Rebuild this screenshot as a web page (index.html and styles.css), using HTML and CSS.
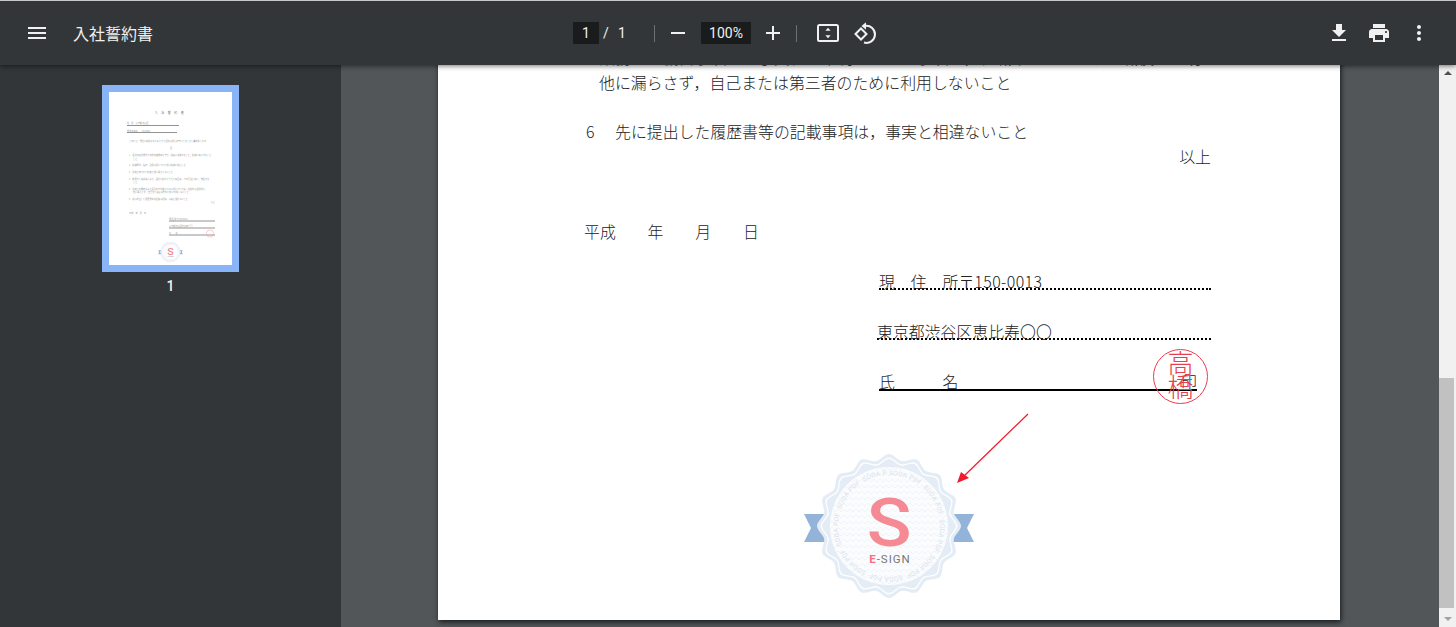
FILE: index.html
```html
<!DOCTYPE html>
<html lang="ja">
<head>
    <meta charset="UTF-8">
    <title>入社誓約書</title>
    <link rel="stylesheet" href="styles.css">
</head>
<body>
    <div class="toolbar">
        <div class="toolbar-left">
            <svg class="icon" viewBox="0 0 24 24"><path d="M3 18h18v-2H3v2zm0-5h18v-2H3v2zm0-7v2h18V6H3z"/></svg>
            <span class="doc-title">入社誓約書</span>
        </div>
        <div class="toolbar-center">
            <span class="num-box page-box">1</span>
            <span class="page-slash">/</span>
            <span class="page-total">1</span>
            <span class="tool-sep sep-a"></span>
            <svg class="icon icon-minus" viewBox="0 0 24 24"><path d="M19 13H5v-2h14v2z"/></svg>
            <span class="num-box zoom-box">100%</span>
            <svg class="icon icon-plus" viewBox="0 0 24 24"><path d="M19 13h-6v6h-2v-6H5v-2h6V5h2v6h6v2z"/></svg>
            <span class="tool-sep sep-b"></span>
            <svg class="icon icon-fit" viewBox="0 0 24 24">
                <rect x="2" y="4" width="20" height="16" rx="1.5" fill="none" stroke="#f1f1f1" stroke-width="2"/>
                <path d="M12 6.8l2.6 3h-5.2zM12 17.2l-2.6-3h5.2z"/>
            </svg>
            <svg class="icon icon-rotate" viewBox="0 0 24 24">
                <path d="M2.5 13l5.5-5.5 5.5 5.5-5.500 5.500z" fill="none" stroke="#f1f1f1" stroke-width="2"/>
                <path d="M12 5a8.500 8.500 0 1 1-1 16.500" fill="none" stroke="#f1f1f1" stroke-width="2"/>
                <path d="M13 1.300l-4.500 3.700 4.500 3.700z"/>
            </svg>
        </div>
        <div class="toolbar-right">
            <svg class="icon" viewBox="0 0 24 24"><path d="M19 9h-4V3H9v6H5l7 7 7-7zM5 18v2h14v-2H5z"/></svg>
            <svg class="icon" viewBox="0 0 24 24"><path d="M19 8H5c-1.660 0-3 1.340-3 3v6h4v4h12v-4h4v-6c0-1.660-1.340-3-3-3zm-3 11H8v-5h8v5zm3-7c-.55 0-1-.45-1-1s.45-1 1-1 1 .45 1 1-.45 1-1 1zm-1-9H6v4h12V3z"/></svg>
            <svg class="icon" viewBox="0 0 24 24"><path d="M12 8c1.100 0 2-.9 2-2s-.9-2-2-2-2 .9-2 2 .9 2 2 2zm0 2c-1.100 0-2 .9-2 2s.9 2 2 2 2-.9 2-2-.9-2-2-2zm0 6c-1.100 0-2 .9-2 2s.9 2 2 2 2-.9 2-2-.9-2-2-2z"/></svg>
        </div>
    </div>

    <div class="viewer">
        <div class="sidebar">
            <div class="thumb">
                <svg class="thumb-page" viewBox="0 0 123 173">
                    <g class="thumb-text">
                        <text x="62" y="22" text-anchor="middle" class="thumb-title">入社誓約書</text>
                        <text x="18" y="32">住　所　東京都渋谷区</text>
                        <text x="18" y="39.500">緊急連絡先　　03-0000</text>
                        <text x="20" y="50">このたび，貴社に就職するにあたり下記の事項を遵守いたすことを誓約致します。</text>
                        <text x="61" y="57">記</text>
                        <text x="20" y="64">1　会社の就業規則その他の諸規程を守り，誠実に勤務すること，職務に専念すること</text>
                        <text x="24" y="67.500">こと</text>
                        <text x="20" y="73.500">2　職務命令，指示，注意事項について従い職務に励むこと</text>
                        <text x="20" y="80.500">3　業務上知り得た秘密を他に漏らさないこと</text>
                        <text x="20" y="87.500">4　故意または過失により，会社に損害を与えた場合は，その責任を負い，賠償する</text>
                        <text x="24" y="91">こと</text>
                        <text x="20" y="97.500">5　業務上の機密および会社の不利益となる事項については，在職中も退職後も，</text>
                        <text x="24" y="101">他に漏らさず，自己または第三者のために利用しないこと</text>
                        <text x="20" y="107.500">6　先に提出した履歴書等の記載事項は，事実と相違ないこと</text>
                        <text x="106" y="111" text-anchor="end">以上</text>
                        <text x="20" y="121.500">平成　年　月　日</text>
                        <text x="60" y="128">現 住 所〒150-0013</text>
                        <text x="60" y="135">東京都渋谷区恵比寿〇〇</text>
                        <text x="60" y="142">氏　　名</text>
                    </g>
                    <path class="thumb-rule" d="M18 33.500h52M18 40.500h50M60 129h46M60 136h46M60 143h46"/>
                    <circle class="thumb-stamp" cx="101" cy="141.500" r="3.600"/>
                    <use href="#seal-art" transform="translate(61.500 160) scale(.145)"/>
                </svg>
            </div>
            <div class="thumb-num">1</div>
        </div>

        <div class="main">
            <div class="page">
                <p class="line indent first-line">業務上の機密事項および貴社の不利益となる事項は，在職中はもとより退職後も一切</p>
                <p class="line indent">他に漏らさず，自己または第三者のために利用しないこと</p>
                <p class="line item-six"><span class="item-no">6</span>先に提出した履歴書等の記載事項は，事実と相違ないこと</p>
                <p class="line closing">以上</p>
                <p class="line date">平成　　年　　月　　日</p>

                <div class="sign">
                    <div class="sign-row dotted">現　住　所〒<span class="zip">150-0013</span></div>
                    <div class="sign-row dotted wide">東京都渋谷区恵比寿〇〇</div>
                    <div class="sign-row solid"><span>氏　　　名</span><span>印</span></div>
                </div>

                <div class="stamp"><span>高</span><span>橋</span></div>

                <svg class="arrow" viewBox="0 0 85 80">
                    <path d="M78 4L13 67" fill="none" stroke="#f01c2c" stroke-width="1.300"/>
                    <path d="M7 73l4-11 8 6z" fill="#f01c2c"/>
                </svg>

                <svg class="seal" viewBox="-85 -75 170 150">
                    <defs>
                        <path id="wedge" d="M0 0L-12.880 -64.730C-9.400 -65.400 -4 -72 0 -72S9.400 -65.400 12.880 -64.730Z"/>
                        <g id="scallop">
                            <use href="#wedge"/>
                            <use href="#wedge" transform="rotate(22.500)"/>
                            <use href="#wedge" transform="rotate(45)"/>
                            <use href="#wedge" transform="rotate(67.500)"/>
                            <use href="#wedge" transform="rotate(90)"/>
                            <use href="#wedge" transform="rotate(112.500)"/>
                            <use href="#wedge" transform="rotate(135)"/>
                            <use href="#wedge" transform="rotate(157.500)"/>
                            <use href="#wedge" transform="rotate(180)"/>
                            <use href="#wedge" transform="rotate(202.500)"/>
                            <use href="#wedge" transform="rotate(225)"/>
                            <use href="#wedge" transform="rotate(247.500)"/>
                            <use href="#wedge" transform="rotate(270)"/>
                            <use href="#wedge" transform="rotate(292.500)"/>
                            <use href="#wedge" transform="rotate(315)"/>
                            <use href="#wedge" transform="rotate(337.500)"/>
                            <circle r="66"/>
                        </g>
                        <pattern id="zigzag" width="12" height="6" patternUnits="userSpaceOnUse">
                            <path d="M0 4l3-3 3 3 3-3 3 3" fill="none" stroke="#edf1f7" stroke-width=".8"/>
                        </pattern>
                        <path id="ring-path" d="M0 -51A51 51 0 1 1 -.01 -51"/>
                    </defs>
                    <g id="seal-art">
                        <path class="ribbon" d="M-85 -12H-64V16H-85L-78 2z"/>
                        <path class="ribbon" d="M85 -12H64V16H85L78 2z"/>
                        <use href="#scallop" fill="#e4ecf5"/>
                        <use href="#scallop" fill="#ffffff" transform="scale(.95)"/>
                        <use href="#scallop" fill="#e4ecf5" transform="scale(.93)"/>
                        <circle r="59" fill="#fbfcfd"/>
                        <circle r="59" fill="url(#zigzag)"/>
                        <text class="seal-ring"><textPath href="#ring-path">SODA PDF  SODA PDF  SODA PDF  SODA PDF  SODA PDF  SODA PDF  SODA PDF  SODA PDF  SODA PDF</textPath></text>
                        <text class="seal-s" x="0" y="20" text-anchor="middle" transform="scale(1.12 1)">S</text>
                        <text class="seal-name" x="1" y="36.500" text-anchor="middle"><tspan class="seal-e">E</tspan>-SIGN</text>
                    </g>
                </svg>
            </div>
        </div>

        <div class="scrollbar">
            <div class="scroll-up"></div>
            <div class="scroll-track"><div class="scroll-thumb"></div></div>
            <div class="scroll-down"></div>
        </div>
    </div>
</body>
</html>
```

FILE: styles.css
```css
* {
    box-sizing: border-box;
}
html, body {
    height: 100%;
}
body {
    margin: 0;
    display: flex;
    flex-direction: column;
    overflow: hidden;
    font-family: Roboto, "Noto Sans CJK JP", sans-serif;
    background-color: #323639;
}

/* toolbar */
.toolbar {
    position: relative;
    z-index: 2;
    flex: 0 0 65px;
    display: flex;
    align-items: center;
    padding-left: 25px;
    padding-right: 25px;
    background-color: #323639;
    border-top: 1px solid #c8c8c8;
    box-shadow: 0 1px 5px rgba(0, 0, 0, 0.55);
    color: #f1f1f1;
    font-size: 14px;
}
.icon {
    flex: none;
    width: 24px;
    height: 24px;
    fill: #f1f1f1;
}
.toolbar-left {
    width: 548px;
    display: flex;
    align-items: center;
}
.doc-title {
    margin-left: 24px;
    font-family: "Noto Sans CJK JP", sans-serif;
    font-size: 16px;
    font-weight: 400;
}
.toolbar-center {
    display: flex;
    align-items: center;
}
.num-box {
    height: 22px;
    line-height: 22px;
    text-align: center;
    background-color: #191b1c;
}
.page-box {
    width: 26px;
}
.zoom-box {
    width: 50px;
    margin-left: 11px;
}
.page-slash {
    width: 14px;
    text-align: center;
}
.page-total {
    width: 18px;
    text-align: center;
}
.tool-sep {
    width: 1px;
    height: 17px;
    background-color: #6e7174;
}
.sep-a {
    margin-left: 23px;
}
.sep-b {
    margin-left: 11px;
}
.icon-minus {
    margin-left: 11px;
}
.icon-plus {
    margin-left: 10px;
}
.icon-fit {
    margin-left: 19px;
}
.icon-rotate {
    margin-left: 13px;
}
.toolbar-right {
    margin-left: auto;
    display: flex;
    gap: 16px;
}

/* body of the viewer */
.viewer {
    flex: 1;
    min-height: 0;
    display: flex;
}
.sidebar {
    flex: 0 0 341px;
    padding-top: 20px;
    display: flex;
    flex-direction: column;
    align-items: center;
    background-color: #323639;
}
.thumb {
    width: 137px;
    height: 187px;
    border: 7px solid #8ab4f8;
    background-color: white;
}
.thumb-page {
    display: block;
    width: 123px;
    height: 173px;
}
.thumb-text {
    font-family: "Noto Sans CJK JP", sans-serif;
    font-size: 2.150px;
    fill: #999;
}
.thumb-title {
    font-size: 3px;
    letter-spacing: 3.500px;
    fill: #777;
}
.thumb-rule {
    fill: none;
    stroke: #777;
    stroke-width: .8;
}
.thumb-stamp {
    fill: none;
    stroke: #f29aa2;
    stroke-width: .5;
}
.thumb-num {
    margin-top: 5px;
    color: #f1f1f1;
    font-size: 14px;
    font-weight: 500;
    line-height: 18px;
}

.main {
    flex: 1;
    min-width: 0;
    overflow: hidden;
    display: flex;
    justify-content: center;
    padding-right: 2px;
    background-color: #525659;
}
.page {
    position: relative;
    flex: 0 0 902px;
    min-width: 0;
    height: 573px;
    margin-top: -18px;
    padding-left: 147px;
    padding-right: 129px;
    background-color: white;
    box-shadow: 1px 2px 5px rgba(0, 0, 0, 0.7);
    font-family: "Noto Sans CJK JP", sans-serif;
    font-size: 15.900px;
    font-weight: 300;
    color: #222;
}
.line {
    margin: 0;
    line-height: 24px;
    white-space: nowrap;
}
.first-line {
    height: 24px;
    line-height: 22px;
}
.indent {
    padding-left: 14px;
}
.item-six {
    margin-top: 25px;
}
.item-no {
    display: inline-block;
    width: 30px;
    padding-left: 1px;
}
.closing {
    margin-top: 1px;
    text-align: right;
}
.date {
    margin-top: 51px;
    margin-left: -1px;
}

/* signature block */
.sign {
    margin-top: 28px;
    margin-left: 294px;
}
.sign-row {
    height: 18px;
    line-height: 20px;
    margin-bottom: 32px;
    white-space: nowrap;
}
.zip {
    letter-spacing: .4px;
}
.dotted {
    border-bottom: 2px dotted #000;
}
.wide {
    margin-left: -2px;
}
.solid {
    display: flex;
    justify-content: space-between;
    width: 318px;
    height: 19px;
    border-bottom: 2px solid #000;
}

/* overlays on the page */
.stamp {
    position: absolute;
    left: 715px;
    top: 302px;
    width: 55px;
    height: 55px;
    padding-bottom: 5px;
    display: flex;
    flex-direction: column;
    align-items: center;
    justify-content: center;
    border: 1.500px solid #e83e4e;
    border-radius: 50%;
    color: #e83e4e;
    font-size: 26px;
    font-weight: 300;
    line-height: 24px;
}
.arrow {
    position: absolute;
    left: 512px;
    top: 363px;
    width: 85px;
    height: 80px;
}
.seal {
    position: absolute;
    left: 366px;
    top: 404px;
    width: 170px;
    height: 150px;
}
.ribbon {
    fill: #93b4d8;
}
.seal-ring {
    font-family: Roboto, sans-serif;
    font-size: 6.500px;
    font-weight: 400;
    fill: #d8e2ee;
    letter-spacing: .3px;
    white-space: pre;
}
.seal-s {
    font-family: Roboto, sans-serif;
    font-size: 66px;
    font-weight: 500;
    fill: #f58a95;
}
.seal-name {
    font-family: Roboto, sans-serif;
    font-size: 11.500px;
    font-weight: 400;
    letter-spacing: 1px;
    fill: #777;
}
.seal-e {
    font-weight: 700;
    fill: #f2717e;
}

/* scrollbar */
.scrollbar {
    flex: 0 0 17px;
    display: flex;
    flex-direction: column;
    align-items: center;
    background-color: #f1f1f1;
}
.scroll-track {
    flex: 1;
    width: 100%;
    padding-top: 298px;
}
.scroll-thumb {
    width: 15px;
    height: 230px;
    background-color: #c1c1c1;
}
.scroll-up, .scroll-down {
    flex: none;
    width: 0;
    height: 0;
    border-left: 4px solid transparent;
    border-right: 4px solid transparent;
}
.scroll-up {
    margin-top: 6px;
    margin-bottom: 5px;
    border-bottom: 4px solid #505050;
}
.scroll-down {
    margin-top: 7px;
    margin-bottom: 6px;
    border-top: 4px solid #a3a3a3;
}
```
